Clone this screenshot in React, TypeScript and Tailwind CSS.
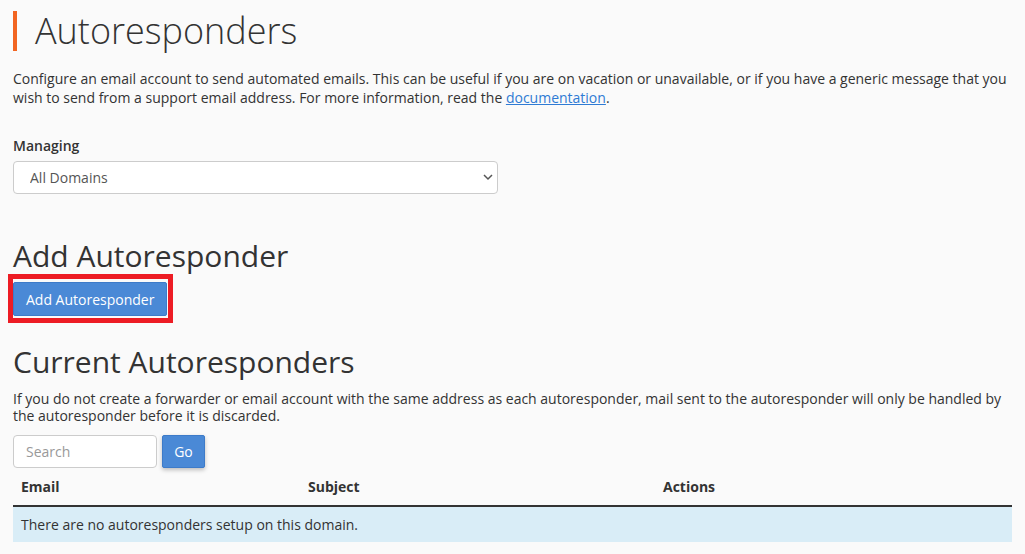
import React from "react";

export default function App() {
  return (
    <div
      className="min-h-[554px] w-full bg-[#fafafa] px-[13px] text-[#333] text-[14px]"
      style={{ fontFamily: '"Open Sans", "Noto Sans", sans-serif' }}
    >
      <h1 className="pt-[11px]">
        <span className="flex h-[40px] items-center border-l-4 border-[#f26522] pl-[18px] text-[36px] font-light leading-[40px] text-[#333]">
          Autoresponders
        </span>
      </h1>
      <p className="mt-[18px] leading-[19px]">
        Configure an email account to send automated emails. This can be useful if you are on vacation or unavailable, or if you have a generic message that you wish to send from a support email address. For more information, read the{" "}
        <a href="#" className="text-[#2f7bd4] underline">
          documentation
        </a>
        .
      </p>
      <label className="mt-[29px] block font-semibold leading-[20px]">Managing</label>
      <div className="relative mt-[5px] w-[485px]">
        <select className="h-[33px] w-full appearance-none rounded-[4px] border border-[#ccc] bg-white pl-[16px] text-[14px] text-[#555]">
          <option>All Domains</option>
        </select>
        <svg
          className="pointer-events-none absolute right-[5px] top-[12px]"
          width="10"
          height="8"
          viewBox="0 0 10 8"
        >
          <path d="M1 2 L5 6 L9 2" fill="none" stroke="#555" strokeWidth="1.5" />
        </svg>
      </div>
      <h2 className="mt-[44px] text-[30px] font-normal leading-[36px]">Add Autoresponder</h2>
      <div className="mt-[8px] flex">
        <div className="relative">
          <button className="h-[34px] rounded-[2px] border border-[#3d7bc9] bg-[#4a89d6] px-[12px] text-[14px] text-white">
            Add Autoresponder
          </button>
          <span className="pointer-events-none absolute -bottom-[7px] -left-[5px] -right-[6px] -top-[8px] border-[5px] border-[#ed1c24]" />
        </div>
      </div>
      <h2 className="mt-[28px] text-[30px] font-normal leading-[36px]">Current Autoresponders</h2>
      <p className="mt-[10px] leading-[17px]">
        If you do not create a forwarder or email account with the same address as each autoresponder, mail sent to the autoresponder will only be handled by the autoresponder before it is discarded.
      </p>
      <div className="mt-[11px] flex gap-[5px]">
        <input
          placeholder="Search"
          className="h-[33px] w-[144px] rounded-[4px] border border-[#ccc] bg-white px-[12px] text-[14px] placeholder:text-[#999]"
        />
        <button className="h-[33px] w-[43px] rounded-[2px] border border-[#3d7bc9] bg-[#4a89d6] text-[14px] text-white shadow-[0_2px_4px_rgba(0,0,0,0.25)]">
          Go
        </button>
      </div>
      <table className="mt-[1px] w-[999px] border-collapse">
        <thead>
          <tr className="border-b-2 border-[#333]">
            <th className="w-[287px] px-[8px] py-[8px] text-left font-bold leading-[20px]">Email</th>
            <th className="w-[355px] px-[8px] py-[8px] text-left font-bold leading-[20px]">Subject</th>
            <th className="px-[8px] py-[8px] text-left font-bold leading-[20px]">Actions</th>
          </tr>
        </thead>
        <tbody>
          <tr className="bg-[#d9edf7]">
            <td colSpan={3} className="px-[8px] py-[8px] leading-[19px]">
              There are no autoresponders setup on this domain.
            </td>
          </tr>
        </tbody>
      </table>
    </div>
  );
}
